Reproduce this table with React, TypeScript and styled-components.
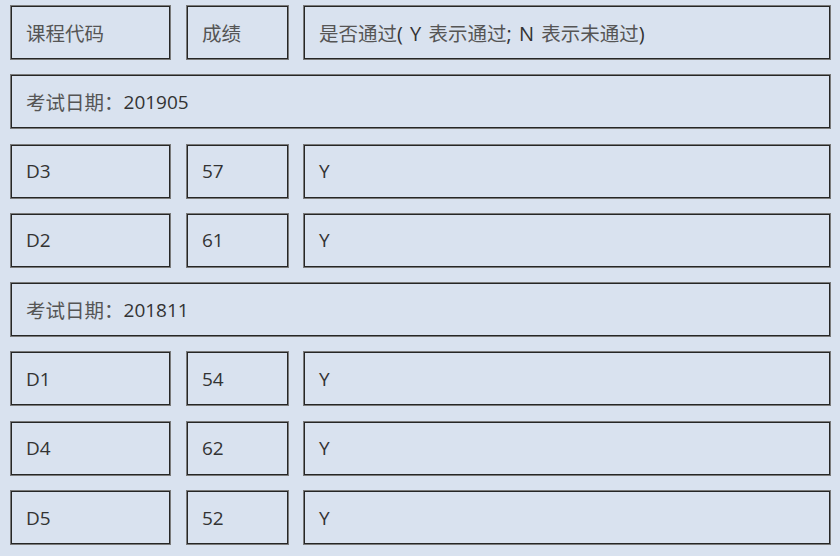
import React from "react"
import styled, { createGlobalStyle } from "styled-components"

const GlobalStyle = createGlobalStyle`
  html, body {
    margin: 0;
    padding: 0;
    background: #d9e2ef;
  }
`

const Page = styled.div`
  padding: 5px 9px 0 10px;
  display: flex;
  flex-direction: column;
  gap: 14.3px;
  font-family: "Open Sans", "Noto Sans CJK SC", sans-serif;
  font-size: 19px;
  color: #333;
`

const Row = styled.div`
  display: grid;
  grid-template-columns: 161px 103px 1fr;
  column-gap: 15px;
`

const Cell = styled.div<{ $wide?: boolean }>`
  grid-column: ${props => (props.$wide ? "1 / -1" : "auto")};
  height: 55px;
  box-sizing: border-box;
  border: 1px solid #7a7a7a;
  box-shadow: inset 0 0 0 1px #262626;
  padding-left: 15px;
  display: flex;
  align-items: center;
  white-space: nowrap;

  &:nth-child(3) {
    margin-left: -1px;
  }
`

const Label = styled.span`
  color: #555;
  font-family: "Noto Sans CJK SC", sans-serif;
  font-size: 19.5px;
`

const Latin = styled.span`
  font-size: 20px;
  word-spacing: 2px;
`

interface Record {
  code: string
  score: number
  passed: string
}

const groups: { date: string; records: Record[] }[] = [
  {
    date: "201905",
    records: [
      { code: "D3", score: 57, passed: "Y" },
      { code: "D2", score: 61, passed: "Y" },
    ],
  },
  {
    date: "201811",
    records: [
      { code: "D1", score: 54, passed: "Y" },
      { code: "D4", score: 62, passed: "Y" },
      { code: "D5", score: 52, passed: "Y" },
    ],
  },
]

const App = () => {
  return (
    <Page>
      <GlobalStyle />
      <Row>
        <Cell>
          <Label>课程代码</Label>
        </Cell>
        <Cell>
          <Label>成绩</Label>
        </Cell>
        <Cell>
          <span>
            <Label>是否通过</Label>
            <Latin>( Y </Latin>
            <Label>表示通过</Label>
            <Latin>; N </Latin>
            <Label>表示未通过</Label>
            <Latin>)</Latin>
          </span>
        </Cell>
      </Row>
      {groups.map(group => (
        <React.Fragment key={group.date}>
          <Row>
            <Cell $wide>
              <Label>考试日期：</Label>
              {group.date}
            </Cell>
          </Row>
          {group.records.map(record => (
            <Row key={record.code}>
              <Cell>{record.code}</Cell>
              <Cell>{record.score}</Cell>
              <Cell>{record.passed}</Cell>
            </Row>
          ))}
        </React.Fragment>
      ))}
    </Page>
  )
}

export default App
